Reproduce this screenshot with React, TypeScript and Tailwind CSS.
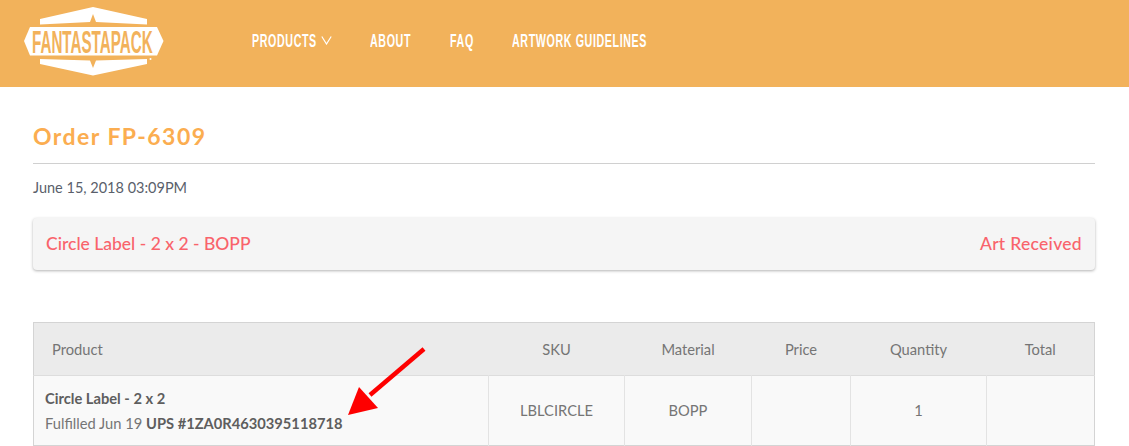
function NavText({ children }: { children: string }) {
  return (
    <span className="inline-block origin-left scale-x-[0.595] whitespace-nowrap text-white text-[18px] leading-[20px] font-bold tracking-[1px] [font-family:'Liberation_Sans',sans-serif] uppercase">
      {children}
    </span>
  );
}

export default function App() {
  const cell = "border-r border-[#e3e3e3]";
  return (
    <div className="w-[1129px] h-[446px] overflow-hidden bg-white [font-family:Lato,sans-serif]">
      <header className="h-[87px] bg-[#f2b25b] flex items-center pl-[24px]">
        <svg width="140" height="70" viewBox="24 6 140 70" className="shrink-0 -mt-[5px]">
          <path d="M40 19 L93 7 L147 19 L147 24.5 L96 22 L93 14 L90 22 L40 24.5 Z" fill="#fff" />
          <path d="M40 59 L90 60.5 L93 68 L96 60.5 L147 59 L147 64 L93 75.5 L40 64 Z" fill="#fff" />
          <path d="M30 27 L157 27 L163.5 41 L157 55.5 L30 55.5 L24 41 Z" fill="#fff" />
          <text transform="translate(32 52.5) scale(0.49 1)" fontFamily="'Liberation Sans',sans-serif" fontWeight="700" fontSize="31" fill="#f2b25b">FANTASTAPACK</text>
          <circle cx="150.5" cy="59" r="1" fill="#fff" />
        </svg>
        <nav className="flex items-center ml-[88px] -mt-[6px]">
          <span className="flex items-center w-[118px]">
            <span className="w-[69px]"><NavText>Products</NavText></span>
            <svg width="11" height="9" viewBox="0 0 11 9" fill="none" stroke="#fff" strokeWidth="1.2"><path d="M0.8 0.5 L5.5 8 L10.2 0.5" /></svg>
          </span>
          <span className="w-[80px]"><NavText>About</NavText></span>
          <span className="w-[62px]"><NavText>FAQ</NavText></span>
          <span className="w-[140px]"><NavText>Artwork Guidelines</NavText></span>
        </nav>
      </header>
      <main className="px-[33px] w-[1128px]">
        <h1 className="text-[23px] leading-[28px] font-bold tracking-[1.45px] text-[#fbad50] mt-[35px] pb-[13px] border-b border-[#d0d0d0]">Order FP-6309</h1>
        <p className="text-[14.5px] leading-[20px] text-[#5a5f6b] mt-[14px]">June 15, 2018 03:09PM</p>
        <div className="mt-[20px] h-[52px] rounded-[4px] bg-[#f5f5f5] shadow-[0_1px_3px_rgba(0,0,0,0.3)] flex items-center justify-between px-[13px] text-[#f9636b] text-[17.5px] font-medium">
          <span>Circle Label - 2 x 2 - BOPP</span>
          <span className="tracking-[0.3px]">Art Received</span>
        </div>
        <table className="mt-[52px] w-[1062px] table-fixed border-collapse border border-[#d4d4d4] text-[14.7px] text-[#757575]">
          <colgroup>
            <col className="w-[455px]" />
            <col className="w-[136px]" />
            <col className="w-[127px]" />
            <col className="w-[99px]" />
            <col className="w-[136px]" />
            <col />
          </colgroup>
          <thead>
            <tr className="h-[53px] bg-[#ebebeb] border-b border-[#dddddd]">
              <th className="font-normal text-left pl-[18px]">Product</th>
              <th className="font-normal">SKU</th>
              <th className="font-normal">Material</th>
              <th className="font-normal">Price</th>
              <th className="font-normal">Quantity</th>
              <th className="font-normal">Total</th>
            </tr>
          </thead>
          <tbody>
            <tr className="h-[70px] bg-[#f9f9f9] text-center">
              <td className={`text-left pl-[11px] ${cell} relative`}>
                <div className="font-bold leading-[25px] text-[#5e5e5e]">Circle Label - 2 x 2</div>
                <div className="leading-[25px]">Fulfilled Jun 19 <b className="text-[#5e5e5e]">UPS #1ZA0R4630395118718</b></div>
                <svg width="90" height="76" viewBox="0 0 90 76" className="absolute left-[312px] top-[-31px]">
                  <path d="M78 4 L24 50" stroke="#fe0000" strokeWidth="4.5" fill="none" />
                  <path d="M2 70 L13 42 L32 63 Z" fill="#fe0000" />
                </svg>
              </td>
              <td className={cell}>LBLCIRCLE</td>
              <td className={cell}>BOPP</td>
              <td className={cell}></td>
              <td className={cell}>1</td>
              <td></td>
            </tr>
          </tbody>
        </table>
      </main>
    </div>
  );
}
